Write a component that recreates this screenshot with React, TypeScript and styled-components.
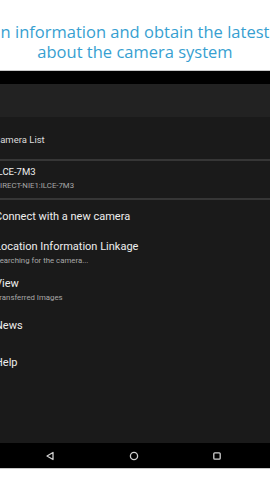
import React from "react";
import styled, { createGlobalStyle } from "styled-components";

const Global = createGlobalStyle`
  html, body { margin: 0; padding: 0; background: #ffffff; }
  #root { width: 270px; height: 480px; }
`;

const Page = styled.div`
  width: 270px;
  height: 480px;
  overflow: hidden;
  background: #ffffff;
  display: flex;
  flex-direction: column;
`;

const Banner = styled.div`
  height: 70px;
  box-sizing: border-box;
  padding-top: 22px;
  display: flex;
  flex-direction: column;
  align-items: center;
  font-family: "Open Sans", "Noto Sans", sans-serif;
  font-size: 16.5px;
  line-height: 20px;
  color: #379fd1;
  white-space: nowrap;
  flex: none;
`;

const Line = styled.div`
  text-align: center;
`;

const Device = styled.div`
  display: flex;
  flex-direction: column;
  border-top: 1px solid #c8c8c8;
  border-bottom: 1px solid #c8c8c8;
  height: 397px;
  flex: none;
`;

const StatusBar = styled.div`
  height: 13px;
  background: #000000;
  flex: none;
`;

const Toolbar = styled.div`
  height: 33px;
  background: #222222;
  flex: none;
`;

const Body = styled.div`
  flex: 1;
  background: #1a1a1a;
  display: flex;
  flex-direction: column;
  font-family: Roboto, "Noto Sans", sans-serif;
  color: #ececec;
  overflow: hidden;
`;

const Header = styled.div`
  height: 42px;
  box-sizing: border-box;
  padding-top: 16px;
  margin-left: -6px;
  font-size: 9.5px;
  line-height: 14px;
  color: #dcdcdc;
  flex: none;
`;

const Divider = styled.div`
  height: 2px;
  background: #363636;
  flex: none;
`;

const CameraRow = styled.div`
  height: 37px;
  box-sizing: border-box;
  padding-top: 4px;
  margin-left: -5px;
  display: flex;
  flex-direction: column;
  flex: none;
`;

const Row = styled.div<{ $top: number }>`
  height: 37px;
  box-sizing: border-box;
  padding-top: ${(p) => p.$top}px;
  margin-left: -5px;
  display: flex;
  flex-direction: column;
  flex: none;
`;

const Title = styled.div<{ $small?: boolean }>`
  font-size: ${(p) => (p.$small ? "9.5px" : "11px")};
  line-height: 14px;
  color: #eeeeee;
  white-space: nowrap;
`;

const Sub = styled.div`
  font-size: 7.8px;
  line-height: 13px;
  color: #a8a8a8;
  white-space: nowrap;
`;

const NavBar = styled.div`
  height: 25px;
  background: #000000;
  display: flex;
  align-items: center;
  justify-content: space-between;
  padding: 0 48px 0 45px;
  flex: none;
`;

const NavIcon = styled.svg`
  width: 10px;
  height: 10px;
  display: block;
`;

const items = [
  { title: "Connect with a new camera", top: 10 },
  { title: "Location Information Linkage", sub: "Searching for the camera...", top: 3 },
  { title: "View", sub: "Transferred Images", top: 3 },
  { title: "News", top: 8 },
  { title: "Help", top: 8 },
];

export default function App() {
  return (
    <>
      <Global />
      <Page>
        <Banner>
          <Line>n information and obtain the latest</Line>
          <Line>about the camera system</Line>
        </Banner>
        <Device>
          <StatusBar />
          <Toolbar />
          <Body>
            <Header>Camera List</Header>
            <Divider />
            <CameraRow>
              <Title $small>ILCE-7M3</Title>
              <Sub>DIRECT-NIE1:ILCE-7M3</Sub>
            </CameraRow>
            <Divider />
            {items.map((it) => (
              <Row key={it.title} $top={it.top}>
                <Title>{it.title}</Title>
                {it.sub && <Sub>{it.sub}</Sub>}
              </Row>
            ))}
          </Body>
          <NavBar>
            <NavIcon viewBox="0 0 10 10">
              <path d="M8 1.5 L2 5 L8 8.5 Z" fill="none" stroke="#cfcfcf" strokeWidth="1.3" strokeLinejoin="round" />
            </NavIcon>
            <NavIcon viewBox="0 0 10 10">
              <circle cx="5" cy="5" r="3.6" fill="none" stroke="#cfcfcf" strokeWidth="1.3" />
            </NavIcon>
            <NavIcon viewBox="0 0 10 10">
              <rect x="1.8" y="1.8" width="6.4" height="6.4" rx="1" fill="none" stroke="#cfcfcf" strokeWidth="1.3" />
            </NavIcon>
          </NavBar>
        </Device>
      </Page>
    </>
  );
}
